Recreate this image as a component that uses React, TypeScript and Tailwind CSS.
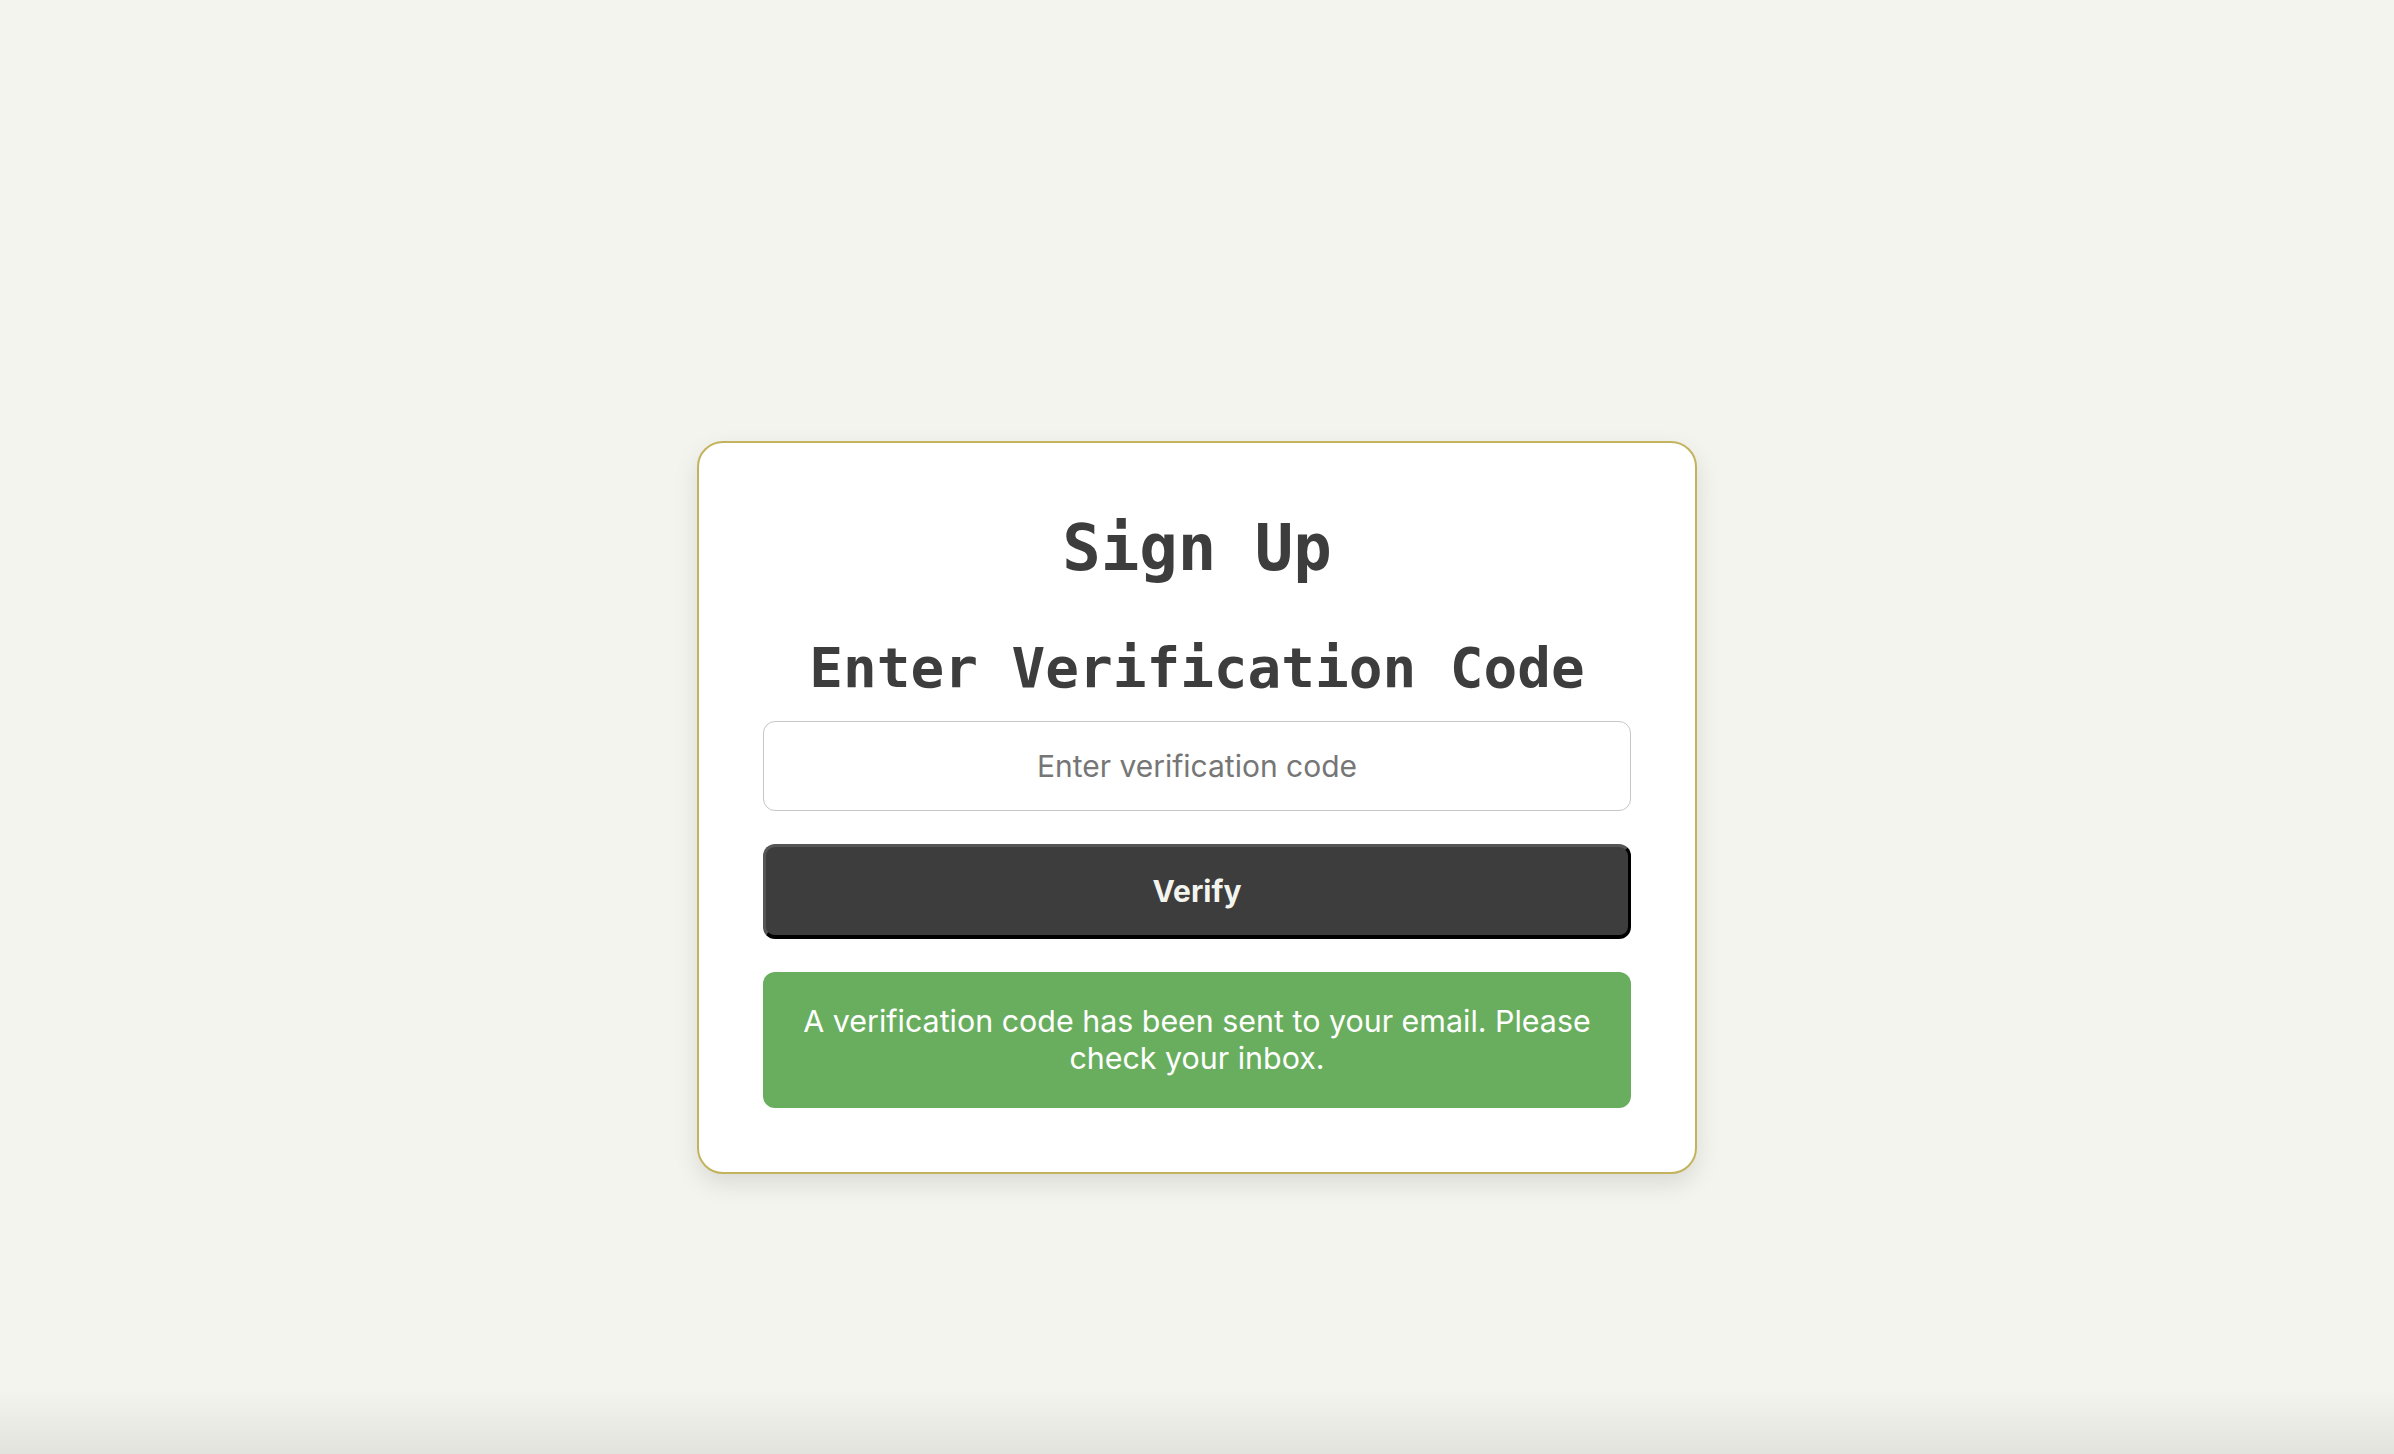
import { useState } from "react"

export default function App() {
    const [code, setCode] = useState("")

    return (
        <div className="flex min-h-screen flex-col bg-[#f3f4ee] font-['Inter','Noto_Sans',sans-serif]">
            <main className="flex flex-1 justify-center pt-[441px]">
                <div className="flex h-fit w-[1000px] flex-col rounded-[26px] border-2 border-[#c4b35e] bg-white px-[64px] pt-[68px] pb-[64px] shadow-[0_10px_24px_rgba(0,0,0,0.10)]">
                    <h1 className="text-center font-['DejaVu_Sans_Mono',monospace] text-[64px] leading-[74px] font-bold text-[#3d3d3d]">
                        Sign Up
                    </h1>
                    <h2 className="mt-[50px] text-center font-['DejaVu_Sans_Mono',monospace] text-[56px] leading-[65px] font-bold text-[#3d3d3d]">
                        Enter Verification Code
                    </h2>

                    {/* Code form */}
                    <input
                        type="text"
                        value={code}
                        onChange={(e) => setCode(e.target.value)}
                        placeholder="Enter verification code"
                        className="mt-[21px] h-[90px] w-full rounded-[12px] border-[1.5px] border-[#c6c6c6] bg-white px-6 text-center text-[30px] text-[#3d3d3d] outline-none placeholder:text-[#767676]"
                    />
                    <button className="mt-[33px] h-[95px] w-full rounded-[12px] border-[3px] border-t-[#555555] border-l-[#555555] border-r-black border-b-[4px] border-b-black bg-[#3d3d3d] text-[30px] font-bold text-[#f4f4ee]">
                        Verify
                    </button>

                    {/* Status message */}
                    <div className="mt-[33px] rounded-[12px] bg-[#69ae5e] px-8 py-[31px] text-center text-[30.4px] leading-[37px] text-white">
                        A verification code has been sent to your email. Please check your inbox.
                    </div>
                </div>
            </main>
            <div className="h-[64px] bg-gradient-to-b from-[#f3f4ee] to-[#e2e3dd]" />
        </div>
    )
}
